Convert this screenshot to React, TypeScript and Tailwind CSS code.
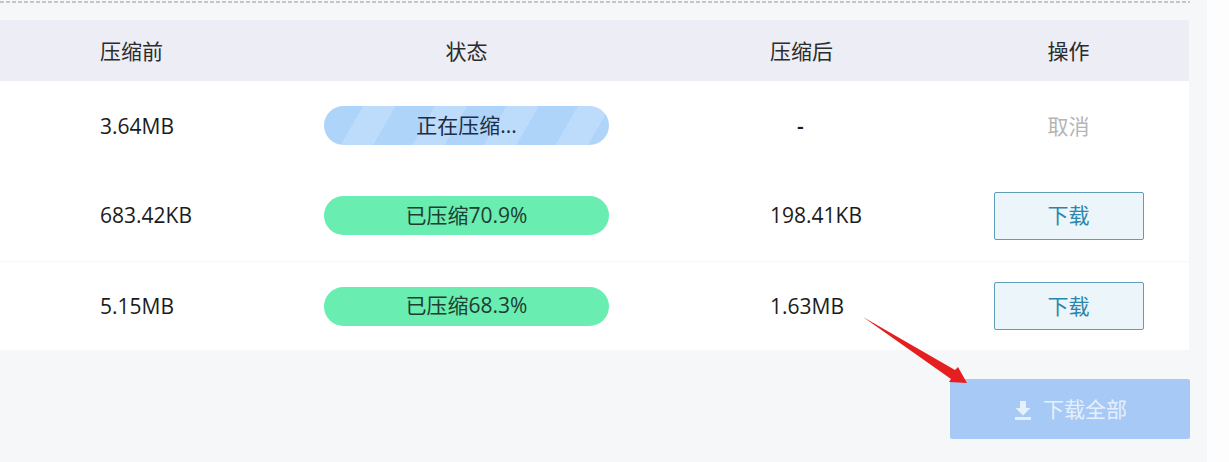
export default function App() {
  const font = { fontFamily: '"Open Sans", "Noto Sans CJK SC", sans-serif' };
  const grid = "grid grid-cols-[324px_285px_339px_241px] items-center";
  return (
    <div style={font} className="relative flex h-[462px] w-[1229px] overflow-hidden bg-[#fdfdfd] text-[21px] text-[#1c1c1c]">
      <div className="h-full w-[1207px] bg-[#f6f7f9]">
        <div className="w-[1190px]">
          <div className="mt-[1px] h-[2px] bg-[repeating-linear-gradient(90deg,#c6c6c9_0px,#c6c6c9_4px,transparent_4px,transparent_6px)]" />
          <div className={`${grid} mt-[17px] h-[61px] w-[1189px] bg-[#ecedf5] pt-[2px] text-[#2b2b2b]`}>
            <div className="pl-[100px]">压缩前</div>
            <div className="text-center">状态</div>
            <div className="pl-[161px]">压缩后</div>
            <div className="text-center">操作</div>
          </div>
          <div className="w-[1189px] bg-white">
            <div className={`${grid} h-[89px]`}>
              <div className="pt-[3px] pl-[100px]">3.64MB</div>
              <div className="flex h-[39px] items-center justify-center rounded-full bg-[repeating-linear-gradient(120deg,#afd4fa_0px,#afd4fa_34px,#bddcfb_34px,#bddcfb_62px)] text-[#1d2d45]">
                正在压缩...
              </div>
              <div className="pl-[188px] pt-[3px] font-semibold">-</div>
              <div className="pt-[3px] text-center text-[#b5b5b5]">取消</div>
            </div>
            <div className={`${grid} h-[91px]`}>
              <div className="pl-[100px] pt-[1px]">683.42KB</div>
              <div className="flex h-[39px] items-center justify-center rounded-full bg-[#69edb0] text-[#1f3d30]">
                已压缩70.9%
              </div>
              <div className="pl-[161px] pt-[1px]">198.41KB</div>
              <div className="flex justify-center">
                <button className="h-[48px] w-[150px] rounded-[2px] border border-[#5f9cb8] bg-[#ebf5fa] pt-[1px] text-[#2b86ad]">
                  下载
                </button>
              </div>
            </div>
            <div className={`${grid} h-[89px] border-t border-[#f7f7f9]`}>
              <div className="pl-[100px] pt-[1px]">5.15MB</div>
              <div className="flex h-[39px] items-center justify-center rounded-full bg-[#69edb0] text-[#1f3d30]">
                已压缩68.3%
              </div>
              <div className="pl-[161px] pt-[1px]">1.63MB</div>
              <div className="flex justify-center">
                <button className="h-[48px] w-[150px] rounded-[2px] border border-[#5f9cb8] bg-[#ebf5fa] pt-[1px] text-[#2b86ad]">
                  下载
                </button>
              </div>
            </div>
          </div>
          <div className="mt-[29px] flex justify-end">
            <button className="flex h-[60px] w-[240px] items-center justify-center gap-[12px] rounded-[2px] bg-[#a6caf5] pl-[2px] pt-[2px] text-[#e6f0fc]">
              <svg width="16" height="20" viewBox="0 0 16 20" fill="currentColor" aria-hidden="true">
                <path d="M5 1h6v7h4.5L8 15.5.5 8H5z" />
                <rect x="0" y="17" width="16" height="3" />
              </svg>
              下载全部
            </button>
          </div>
        </div>
      </div>
      <svg className="absolute left-[855px] top-[310px]" width="125" height="85" viewBox="0 0 125 85" aria-hidden="true">
        <path d="M8 7 L100 60 L103 57 L112 73 L94 72 L96 69 Z" fill="#e51f1f" />
      </svg>
    </div>
  );
}
